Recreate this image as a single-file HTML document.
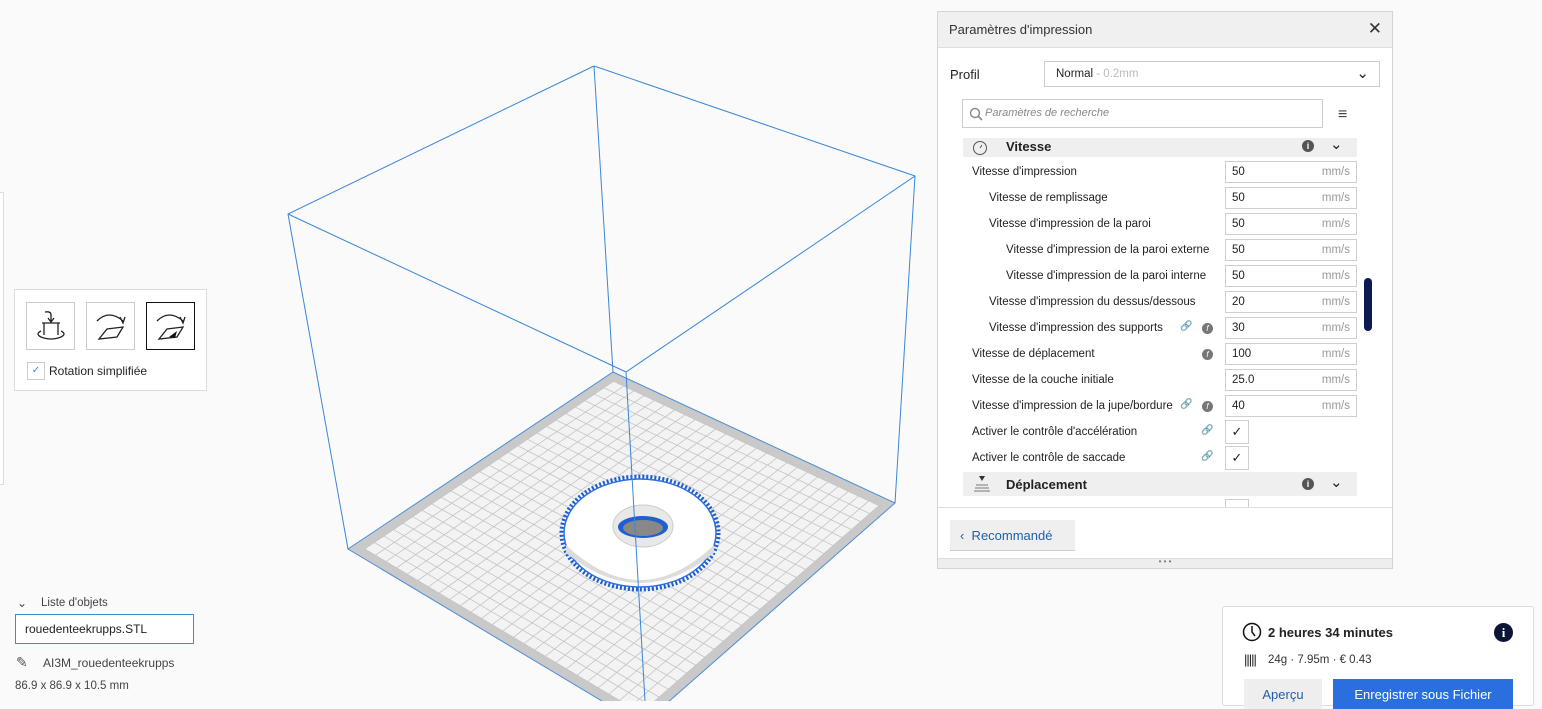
<!DOCTYPE html>
<html><head><meta charset="utf-8"><style>
*{box-sizing:border-box;margin:0;padding:0}
body{width:1542px;height:701px;overflow:hidden;background:#fafafa;font-family:"Liberation Sans","DejaVu Sans",sans-serif;font-size:12px;color:#222;position:relative}
.abs{position:absolute}
.panel{left:937px;top:11px;width:456px;height:558px;background:#fff;border:1px solid #d4d4d4}
.hdr{left:0;top:0;width:454px;height:36px;background:#f0f0f0;border-bottom:1px solid #ddd;font-size:13px;color:#333;padding:10px 11px}
.row{position:absolute;left:34px;font-size:11.5px;color:#222}
.fld{position:absolute;left:287px;width:132px;height:22px;border:1px solid #cfcfcf;background:#fff;font-size:11.5px;padding:4px 6px}
.fld span{position:absolute;right:6px;top:4px;color:#999}
.cb{position:absolute;left:287px;width:24px;height:24px;border:1px solid #cfcfcf;background:#fff;font-size:13px;text-align:center;line-height:22px}
.cat{position:absolute;left:25px;width:394px;background:#efefef;font-weight:bold;font-size:13px}
.ic{position:absolute;font-size:10px;color:#777}
.fx{position:absolute;width:11px;height:11px;border-radius:50%;background:#777;color:#fff;font-size:8px;text-align:center;line-height:11px;font-style:italic}
</style></head><body>
<svg class="abs" style="left:0;top:0" width="1542" height="701" id="sv">
<g id="plate"></g>
</svg>

<!-- left toolbar -->
<div class="abs" style="left:-4px;top:192px;width:8px;height:293px;border:1px solid #ddd;background:#fff"></div>
<div class="abs" style="left:14px;top:289px;width:193px;height:102px;border:1px solid #ddd;background:#fff"></div>
<div class="abs" style="left:26px;top:302px;width:49px;height:48px;border:1px solid #ccc;background:#fff"><svg width="47" height="46"><path d="M14 28 q-6 3 0 6 q10 4 20 0 q6 -3 0 -6 M17 20 v12 M31 20 v12 M15 20 h18 M24 18 v-6 q0 -4 -6 -3 M21 15 l3 4 l3 -4" fill="none" stroke="#222" stroke-width="1.3"/></svg></div>
<div class="abs" style="left:86px;top:302px;width:49px;height:48px;border:1px solid #ccc;background:#fff"><svg width="47" height="46"><path d="M10 18 q12 -12 26 0 M33 14 l3 6 l2 -6 M12 36 l8 -10 l16 -2 l-6 10 z" fill="none" stroke="#222" stroke-width="1.3"/></svg></div>
<div class="abs" style="left:146px;top:302px;width:49px;height:48px;border:1.5px solid #111;background:#fff"><svg width="46" height="45"><path d="M10 18 q12 -12 26 0 M33 14 l3 6 l2 -6 M12 36 l8 -10 l16 -2 l-6 10 z" fill="none" stroke="#222" stroke-width="1.3"/><path d="M22 34 l8 -6 l-2 7z" fill="#111"/></svg></div>
<div class="abs" style="left:27px;top:362px;width:18px;height:18px;border:1px solid #ccc;color:#3a8fc8;font-size:10px;text-align:center;line-height:16px">✓</div>
<div class="abs" style="left:49px;top:364px;font-size:12px">Rotation simplifiée</div>

<!-- object list -->
<div class="abs" style="left:17px;top:596px;font-size:12px;color:#444">⌄</div>
<div class="abs" style="left:41px;top:597px;font-size:11.5px;color:#444">Liste d'objets</div>
<div class="abs" style="left:15px;top:614px;width:179px;height:30px;border:1.5px solid #3a8fc8;background:#fff;padding:7px 9px;font-size:12px">rouedenteekrupps.STL</div>
<div class="abs" style="left:16px;top:654px;font-size:14px;color:#555">✎</div>
<div class="abs" style="left:43px;top:656px;font-size:12px;color:#444">AI3M_rouedenteekrupps</div>
<div class="abs" style="left:15px;top:680px;font-size:11.5px;color:#444">86.9 x 86.9 x 10.5 mm</div>

<!-- settings panel -->
<div class="abs panel">
 <div class="abs hdr">Paramètres d'impression<span style="position:absolute;right:10px;top:7px;font-size:17px;font-weight:bold;color:#333">✕</span></div>
 <div class="abs" style="left:12px;top:55px;font-size:13px">Profil</div>
 <div class="abs" style="left:106px;top:49px;width:336px;height:26px;border:1px solid #ccc;padding:6px 11px;font-size:11.5px">Normal <span style="color:#bbb">- 0.2mm</span><span style="position:absolute;right:10px;top:2px;font-size:15px">⌄</span></div>
 <div class="abs" style="left:24px;top:87px;width:361px;height:29px;border:1px solid #ccc;padding:7px 22px;font-size:11px;font-style:italic;color:#888">Paramètres de recherche<svg style="position:absolute;left:6px;top:7px" width="14" height="14"><circle cx="6" cy="6" r="4.5" fill="none" stroke="#888" stroke-width="1.4"/><path d="M9 9l4 4" stroke="#888" stroke-width="1.6"/></svg></div>
 <div class="abs" style="left:400px;top:94px;font-size:16px;color:#444">≡</div>

 <div class="cat" style="top:126px;height:19px;padding:1px 0 0 43px">Vitesse<svg style="position:absolute;left:9px;top:2px" width="16" height="16"><circle cx="8" cy="8" r="6.5" fill="none" stroke="#555"/><path d="M8 8l2-3" stroke="#555"/></svg><span style="position:absolute;left:339px;top:2px;width:12px;height:12px;border-radius:50%;background:#555;color:#fff;font-size:9px;text-align:center;line-height:12px">i</span><span style="position:absolute;left:367px;top:-3px;font-weight:normal;font-size:15px">⌄</span></div>

 <div class="row" style="top:154px">Vitesse d'impression</div><div class="fld" style="top:149px">50<span>mm/s</span></div>
 <div class="row" style="top:180px;left:51px">Vitesse de remplissage</div><div class="fld" style="top:175px">50<span>mm/s</span></div>
 <div class="row" style="top:206px;left:51px">Vitesse d'impression de la paroi</div><div class="fld" style="top:201px">50<span>mm/s</span></div>
 <div class="row" style="top:232px;left:68px">Vitesse d'impression de la paroi externe</div><div class="fld" style="top:227px">50<span>mm/s</span></div>
 <div class="row" style="top:258px;left:68px">Vitesse d'impression de la paroi interne</div><div class="fld" style="top:253px">50<span>mm/s</span></div>
 <div class="row" style="top:284px;left:51px">Vitesse d'impression du dessus/dessous</div><div class="fld" style="top:279px">20<span>mm/s</span></div>
 <div class="row" style="top:310px;left:51px">Vitesse d'impression des supports</div><div class="ic" style="left:242px;top:309px">🔗</div><div class="fx" style="left:264px;top:311px">f</div><div class="fld" style="top:305px">30<span>mm/s</span></div>
 <div class="row" style="top:336px">Vitesse de déplacement</div><div class="fx" style="left:264px;top:337px">f</div><div class="fld" style="top:331px">100<span>mm/s</span></div>
 <div class="row" style="top:362px">Vitesse de la couche initiale</div><div class="fld" style="top:357px">25.0<span>mm/s</span></div>
 <div class="row" style="top:388px">Vitesse d'impression de la jupe/bordure</div><div class="ic" style="left:242px;top:387px">🔗</div><div class="fx" style="left:264px;top:389px">f</div><div class="fld" style="top:383px">40<span>mm/s</span></div>
 <div class="row" style="top:414px">Activer le contrôle d'accélération</div><div class="ic" style="left:263px;top:413px">🔗</div><div class="cb" style="top:408px">✓</div>
 <div class="row" style="top:440px">Activer le contrôle de saccade</div><div class="ic" style="left:263px;top:439px">🔗</div><div class="cb" style="top:434px">✓</div>
 <div class="cat" style="top:460px;height:24px;padding:5px 0 0 43px">Déplacement<svg style="position:absolute;left:11px;top:3px" width="16" height="18"><path d="M5 1h6l-3 5z" fill="#333"/><path d="M2 10h12M1 13h14M0 16h16" stroke="#777"/></svg><span style="position:absolute;left:339px;top:6px;width:12px;height:12px;border-radius:50%;background:#555;color:#fff;font-size:9px;text-align:center;line-height:12px">i</span><span style="position:absolute;left:367px;top:1px;font-weight:normal;font-size:15px">⌄</span></div>
 <div class="cb" style="top:487px;height:8px;border-bottom:none"></div>
 <div class="abs" style="left:426px;top:266px;width:8px;height:53px;border-radius:4px;background:#0d1a4f"></div>
 <div class="abs" style="left:0;top:495px;width:454px;height:1px;background:#ddd"></div>
 <div class="abs" style="left:12px;top:508px;width:125px;height:31px;background:#efefef;border-bottom:1px solid #ccc;padding:8px 10px;font-size:13px;color:#1e5fa8">‹&nbsp; Recommandé</div>
 <div class="abs" style="left:0;top:546px;width:454px;height:10px;background:#eee;border-top:1px solid #ddd;text-align:center;font-size:8px;line-height:6px;color:#777">• • •</div>
</div>

<!-- bottom right -->
<div class="abs" style="left:1222px;top:606px;width:312px;height:100px;background:#fff;border:1px solid #ddd;border-radius:3px"></div>
<svg class="abs" style="left:1242px;top:622px" width="20" height="20"><circle cx="10" cy="10" r="8.5" fill="none" stroke="#111" stroke-width="1.5"/><path d="M10 4v6l3 4" fill="none" stroke="#111" stroke-width="1.5"/></svg>
<div class="abs" style="left:1268px;top:625px;font-size:13px;font-weight:bold">2 heures 34 minutes</div>
<div class="abs" style="left:1494px;top:623px;width:19px;height:19px;border-radius:50%;background:#0b1536;color:#fff;font-weight:bold;font-size:13px;text-align:center;line-height:19px;font-family:'Liberation Serif',serif">i</div>
<div class="abs" style="left:1244px;top:652px;font-size:13px;letter-spacing:-1px">|||||</div>
<div class="abs" style="left:1268px;top:654px;font-size:11.5px;color:#333">24g · 7.95m · € 0.43</div>
<div class="abs" style="left:1244px;top:679px;width:78px;height:30px;background:#eee;color:#1e5fa8;font-size:13px;text-align:center;padding-top:8px">Aperçu</div>
<div class="abs" style="left:1333px;top:679px;width:180px;height:30px;background:#2a6fe0;color:#fff;font-size:13px;text-align:center;padding-top:8px">Enregistrer sous Fichier</div>

<script>
var s=document.getElementById('plate'),h='';
var T=[613,372],R=[895,503],B=[642,725],Lf=[348,549];
function P(u,v){
 var x=(1-u)*(1-v)*T[0]+u*(1-v)*R[0]+u*v*B[0]+(1-u)*v*Lf[0];
 var y=(1-u)*(1-v)*T[1]+u*(1-v)*R[1]+u*v*B[1]+(1-u)*v*Lf[1];return [x,y];}
h+='<polygon points="'+T+' '+R+' '+B+' '+Lf+'" fill="#c9c9c9" stroke="#4a8fd8" stroke-width="1"/>';
var e=0.03;
h+='<polygon points="'+P(e,e)+' '+P(1-e,e)+' '+P(1-e,1-e)+' '+P(e,1-e)+'" fill="#f3f3f3"/>';
var n=26;
for(var i=0;i<=n;i++){var t=e+(1-2*e)*i/n;
 var a=P(t,e),b=P(t,1-e),c=P(e,t),d=P(1-e,t);
 h+='<line x1="'+a[0]+'" y1="'+a[1]+'" x2="'+b[0]+'" y2="'+b[1]+'" stroke="#c4c4c4" stroke-width="0.8"/>';
 h+='<line x1="'+c[0]+'" y1="'+c[1]+'" x2="'+d[0]+'" y2="'+d[1]+'" stroke="#c4c4c4" stroke-width="0.8"/>';}
var st='stroke="#3a86d8" stroke-width="1" fill="none"';
h+='<polyline points="594,66 915,176 895,503" '+st+'/>';
h+='<polyline points="594,66 288,214 348,549" '+st+'/>';
h+='<polyline points="288,214 626,372 915,176" '+st+'/>';
h+='<line x1="594" y1="66" x2="613" y2="372" '+st+'/>';
h+='<ellipse cx="640" cy="533" rx="78" ry="56" fill="#fff" stroke="#1f5fd0" stroke-width="5" stroke-dasharray="2 2"/>';
h+='<ellipse cx="640" cy="533" rx="76" ry="54" fill="none" stroke="#2f6fe0" stroke-width="1.5"/>';
h+='<path d="M566 545 q74 70 148 0 l0 8 q-74 60 -148 0z" fill="#dcdcdc"/>';
h+='<ellipse cx="643" cy="526" rx="30" ry="21" fill="#e8e8e8" stroke="#ccc"/>';
h+='<ellipse cx="643" cy="527" rx="25" ry="11" fill="#1f5fd0"/>';
h+='<ellipse cx="643" cy="528" rx="20" ry="8" fill="#888"/>';
h+='<line x1="626" y1="372" x2="645" y2="701" stroke="#3a86d8" stroke-width="1"/>';
s.innerHTML=h;
</script>
</body></html>
